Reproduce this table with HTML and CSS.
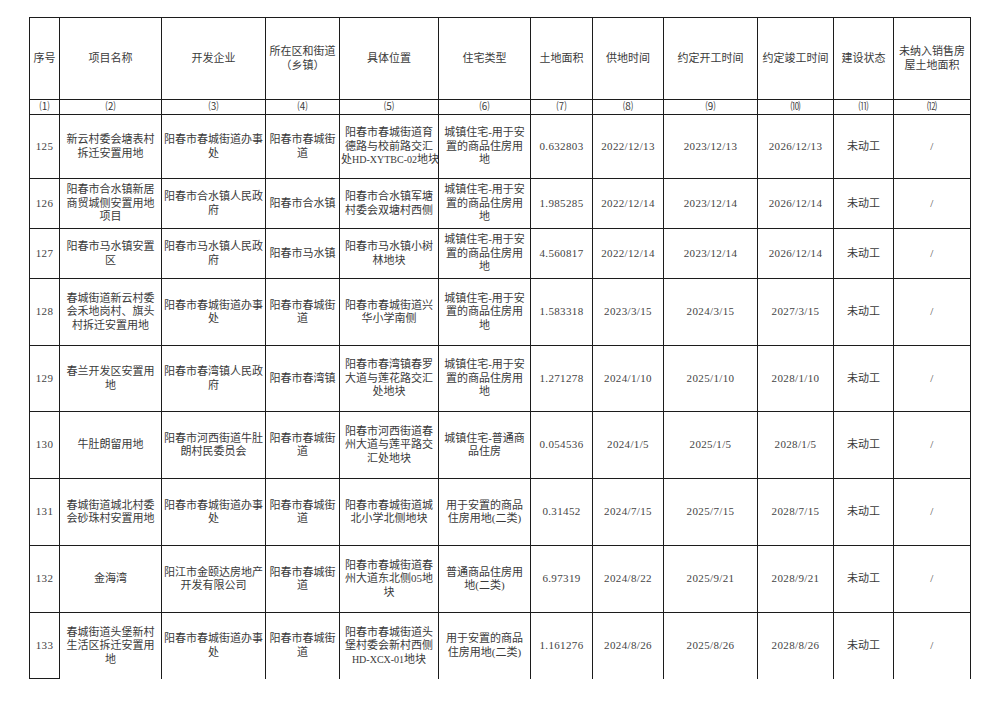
FILE: index.html
```html
<!DOCTYPE html>
<html lang="zh-CN">
<head>
<meta charset="utf-8">
<title>住宅用地供应情况表</title>
<link rel="stylesheet" href="styles.css">
</head>
<body>
<table class="sheet">
  <colgroup>
    <col class="c1"><col class="c2"><col class="c3"><col class="c4"><col class="c5"><col class="c6">
    <col class="c7"><col class="c8"><col class="c9"><col class="c10"><col class="c11"><col class="c12">
  </colgroup>
  <thead>
    <tr class="hd">
      <th>序号</th><th>项目名称</th><th>开发企业</th><th>所在区和街道<br>（乡镇）</th><th>具体位置</th><th>住宅类型</th>
      <th>土地面积</th><th>供地时间</th><th>约定开工时间</th><th>约定竣工时间</th><th>建设状态</th><th>未纳入销售房<br>屋土地面积</th>
    </tr>
    <tr class="idx">
      <td>⑴</td><td>⑵</td><td>⑶</td><td>⑷</td><td>⑸</td><td>⑹</td><td>⑺</td><td>⑻</td><td>⑼</td><td>⑽</td><td>⑾</td><td>⑿</td>
    </tr>
  </thead>
  <tbody>
    <tr class="r64">
      <td class="num">125</td><td>新云村委会塘表村<br>拆迁安置用地</td><td>阳春市春城街道办事<br>处</td><td>阳春市春城街<br>道</td>
      <td>阳春市春城街道育<br>德路与校前路交汇<br>处<span class="lat">HD-XYTBC-02</span>地块</td><td>城镇住宅-用于安<br>置的商品住房用<br>地</td>
      <td class="num">0.632803</td><td class="num">2022/12/13</td><td class="num">2023/12/13</td><td class="num">2026/12/13</td><td>未动工</td><td class="num">/</td>
    </tr>
    <tr class="r50">
      <td class="num">126</td><td>阳春市合水镇新居<br>商贸城侧安置用地<br>项目</td><td>阳春市合水镇人民政<br>府</td><td>阳春市合水镇</td>
      <td>阳春市合水镇军塘<br>村委会双塘村西侧</td><td>城镇住宅-用于安<br>置的商品住房用<br>地</td>
      <td class="num">1.985285</td><td class="num">2022/12/14</td><td class="num">2023/12/14</td><td class="num">2026/12/14</td><td>未动工</td><td class="num">/</td>
    </tr>
    <tr class="r50">
      <td class="num">127</td><td>阳春市马水镇安置<br>区</td><td>阳春市马水镇人民政<br>府</td><td>阳春市马水镇</td>
      <td>阳春市马水镇小树<br>林地块</td><td>城镇住宅-用于安<br>置的商品住房用<br>地</td>
      <td class="num">4.560817</td><td class="num">2022/12/14</td><td class="num">2023/12/14</td><td class="num">2026/12/14</td><td>未动工</td><td class="num">/</td>
    </tr>
    <tr class="r67">
      <td class="num">128</td><td>春城街道新云村委<br>会禾地岗村、旗头<br>村拆迁安置用地</td><td>阳春市春城街道办事<br>处</td><td>阳春市春城街<br>道</td>
      <td>阳春市春城街道兴<br>华小学南侧</td><td>城镇住宅-用于安<br>置的商品住房用<br>地</td>
      <td class="num">1.583318</td><td class="num">2023/3/15</td><td class="num">2024/3/15</td><td class="num">2027/3/15</td><td>未动工</td><td class="num">/</td>
    </tr>
    <tr class="r66">
      <td class="num">129</td><td>春兰开发区安置用<br>地</td><td>阳春市春湾镇人民政<br>府</td><td>阳春市春湾镇</td>
      <td>阳春市春湾镇春罗<br>大道与莲花路交汇<br>处地块</td><td>城镇住宅-用于安<br>置的商品住房用<br>地</td>
      <td class="num">1.271278</td><td class="num">2024/1/10</td><td class="num">2025/1/10</td><td class="num">2028/1/10</td><td>未动工</td><td class="num">/</td>
    </tr>
    <tr class="r67">
      <td class="num">130</td><td>牛肚朗留用地</td><td>阳春市河西街道牛肚<br>朗村民委员会</td><td>阳春市春城街<br>道</td>
      <td>阳春市河西街道春<br>州大道与莲平路交<br>汇处地块</td><td>城镇住宅-普通商<br>品住房</td>
      <td class="num">0.054536</td><td class="num">2024/1/5</td><td class="num">2025/1/5</td><td class="num">2028/1/5</td><td>未动工</td><td class="num">/</td>
    </tr>
    <tr class="r67">
      <td class="num">131</td><td>春城街道城北村委<br>会砂珠村安置用地</td><td>阳春市春城街道办事<br>处</td><td>阳春市春城街<br>道</td>
      <td>阳春市春城街道城<br>北小学北侧地块</td><td>用于安置的商品<br>住房用地(二类)</td>
      <td class="num">0.31452</td><td class="num">2024/7/15</td><td class="num">2025/7/15</td><td class="num">2028/7/15</td><td>未动工</td><td class="num">/</td>
    </tr>
    <tr class="r67">
      <td class="num">132</td><td>金海湾</td><td>阳江市金颐达房地产<br>开发有限公司</td><td>阳春市春城街<br>道</td>
      <td>阳春市春城街道春<br>州大道东北侧05地<br>块</td><td>普通商品住房用<br>地(二类)</td>
      <td class="num">6.97319</td><td class="num">2024/8/22</td><td class="num">2025/9/21</td><td class="num">2028/9/21</td><td>未动工</td><td class="num">/</td>
    </tr>
    <tr class="r66 last">
      <td class="num first">133</td><td>春城街道头堡新村<br>生活区拆迁安置用<br>地</td><td>阳春市春城街道办事<br>处</td><td>阳春市春城街<br>道</td>
      <td>阳春市春城街道头<br>堡村委会新村西侧<br><span class="lat">HD-XCX-01</span>地块</td><td>用于安置的商品<br>住房用地(二类)</td>
      <td class="num">1.161276</td><td class="num">2024/8/26</td><td class="num">2025/8/26</td><td class="num">2028/8/26</td><td>未动工</td><td class="num">/</td>
    </tr>
  </tbody>
</table>
</body>
</html>
```

FILE: styles.css
```css
html, body {
  margin: 0;
  padding: 0;
  background: #ffffff;
}

body {
  padding: 17px 0 0 29px;
  font-family: "Liberation Serif", "Noto Sans CJK SC", serif;
  font-size: 11px;
  color: #3a3a3a;
}

.sheet {
  border-collapse: collapse;
  table-layout: fixed;
  width: 942px;
}

.c1 { width: 30px; }
.c2 { width: 102px; }
.c3 { width: 104px; }
.c4 { width: 74px; }
.c5 { width: 99px; }
.c6 { width: 92px; }
.c7 { width: 62px; }
.c8 { width: 71px; }
.c9 { width: 94px; }
.c10 { width: 76px; }
.c11 { width: 60px; }
.c12 { width: 77px; }

.sheet th,
.sheet td {
  border: 1px solid #1c1c1c;
  padding: 0 1px;
  text-align: center;
  vertical-align: middle;
  line-height: 13.5px;
  white-space: nowrap;
  font-weight: 400;
  overflow: hidden;
}

.sheet th {
  font-size: 11px;
}

.hd th { height: 81px; }

.idx td {
  height: 14px;
  font-size: 10px;
  line-height: 12px;
}

.r64 td { height: 63px; }
.r50 td { height: 49px; }
.r66 td { height: 65px; }
.r67 td { height: 66px; }

.num {
  letter-spacing: 0.35px;
  color: #444444;
}

.lat {
  font-size: 10px;
  letter-spacing: 0;
}

.last td {
  border-bottom: none;
}

.last td.first {
  border-bottom: 1px solid #1c1c1c;
}
```
